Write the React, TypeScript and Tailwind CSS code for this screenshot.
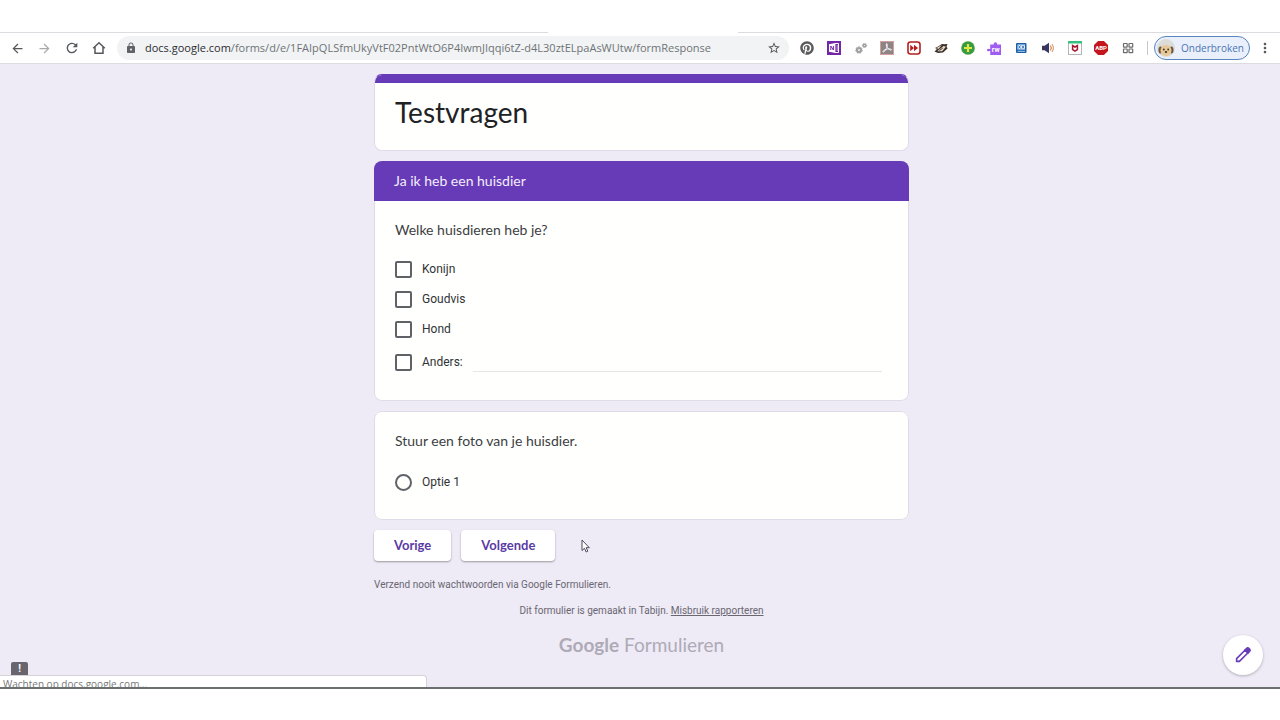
import React from "react"
import {
  MdArrowBack,
  MdArrowForward,
  MdRefresh,
  MdLock,
  MdStarBorder,
  MdMoreVert,
} from "react-icons/md"
import { FaPinterest } from "react-icons/fa"

const pets = ["Konijn", "Goudvis", "Hond"]

const navButton = "flex h-7 w-[27px] items-center justify-center text-[#55585c]"
const checkbox = "h-[17px] w-[17px] shrink-0 appearance-none rounded-xs border-2 border-[#5f6368] bg-white"
const formButton =
  "h-[31px] rounded-sm bg-white px-5 font-['Lato',sans-serif] text-[13px] font-bold text-[#5b3aa5] shadow-[0_1px_2px_rgba(0,0,0,0.35)]"
const question = "float-left w-full font-['Lato',sans-serif] text-[14px] leading-5 text-[#3c4043]"

function HomeIcon() {
  return (
    <svg viewBox="0 0 14 14" className="h-3.5 w-3.5" fill="none" stroke="currentColor" strokeWidth="1.5">
      <path d="M1.2 7.2 7 1.8l5.8 5.4M3 6v6.2h8V6" />
    </svg>
  )
}

function PencilIcon() {
  return (
    <svg viewBox="0 0 20 20" className="h-5 w-5" fill="none" stroke="currentColor" strokeWidth="1.6">
      <path d="M3.600 13.600 12.200 5l2.800 2.800-8.600 8.600H3.600z" strokeLinejoin="round" />
      <path d="m12 5 1.700-1.700a1.500 1.500 0 0 1 2.100 0l.9.9a1.500 1.500 0 0 1 0 2.100L15 8z" fill="currentColor" />
    </svg>
  )
}

function NotebookIcon() {
  return (
    <svg viewBox="0 0 14 14" className="h-3.5 w-3.5">
      <rect width="14" height="14" fill="#7326a8" />
      <path d="M8 2.5h3.5v9H8" fill="none" stroke="#fff" />
      <path d="M11.5 5h-2M11.5 7h-2M11.5 9h-2" stroke="#fff" strokeWidth=".8" />
      <path d="M2 3.2 8.4 2v10L2 10.8z" fill="#fff" />
      <path d="M3.800 9V5l2.600 4V5" fill="none" stroke="#7326a8" />
    </svg>
  )
}

function GearsIcon() {
  return (
    <svg viewBox="0 0 14 14" className="h-3.5 w-3.5" fill="none" stroke="#a0a0a0">
      <circle cx="5" cy="9" r="2" strokeWidth="2.2" />
      <circle cx="5" cy="9" r="3.3" strokeWidth="1" strokeDasharray="1.5 1.4" />
      <circle cx="10.5" cy="4.5" r="1.3" strokeWidth="1.6" />
      <circle cx="10.5" cy="4.5" r="2.2" strokeWidth=".8" strokeDasharray="1.1 .9" />
    </svg>
  )
}

function PdfIcon() {
  return (
    <svg viewBox="0 0 14 14" className="h-3.5 w-3.5">
      <rect x=".5" y=".5" width="13" height="13" fill="#8d8585" stroke="#d3a09b" />
      <path
        d="M6.6 2.6c1.200 0 .5 3.200-.5 5.200S3.700 11.500 3 11c-.8-.8 2-2.500 4.600-2.900s4.200.1 3.900.8c-.5.900-2.900-.5-4.100-2.400S6 2.700 6.600 2.600z"
        fill="none"
        stroke="#fff"
        strokeWidth=".9"
      />
    </svg>
  )
}

function FastForwardIcon() {
  return (
    <svg viewBox="0 0 14 14" className="h-3.5 w-3.5">
      <rect x="1" y="1" width="12" height="12" rx="2.500" fill="#fff" stroke="#b3201f" strokeWidth="1.600" />
      <path d="M3.200 3.800v6.400L7 7zM7 3.800v6.400L11 7z" fill="#b3201f" />
    </svg>
  )
}

function BadgerIcon() {
  return (
    <svg viewBox="0 0 14 14" className="h-3.5 w-3.5">
      <path d="M.5 10.500 3 8l-2-1 3-1.500L8 3l2.500.2L13.500 3l-1 2.500 1 2L9 11.500l-5 .5z" fill="#3a2e28" />
      <path d="M3.200 10.300 9.500 5l2.400.7-3.800 4.600zM2.500 7 7.800 3.900 4.500 8z" fill="#eadfce" />
      <path d="M5.500 9.500 8.800 7" stroke="#3a2e28" />
    </svg>
  )
}

function PlusIcon() {
  return (
    <svg viewBox="0 0 14 14" className="h-3.5 w-3.5">
      <circle cx="7" cy="7" r="6.800" fill="#3c9a3f" />
      <path d="M7 3v8M3 7h8" stroke="#d9e94a" strokeWidth="2.200" />
    </svg>
  )
}

function PuzzleIcon() {
  return (
    <svg viewBox="0 0 14 14" className="h-3.5 w-3.5">
      <path d="M3.200 3.500h3.600a1.700 1.700 0 1 1 3.200 0H14V14H3.200v-4h-1a1.300 1.300 0 1 1 0-2h1z" fill="#a05df0" />
      <text x="8.700" y="11" fontSize="7" fontWeight="700" textAnchor="middle" fill="#fff" fontFamily="Roboto, sans-serif">
        rw
      </text>
    </svg>
  )
}

function ReaderIcon() {
  return (
    <svg viewBox="0 0 14 14" className="h-3.5 w-3.5">
      <rect x="2" y="2" width="10.500" height="10" rx="1" fill="#1d5fa6" />
      <rect x="3.500" y="3.500" width="7.500" height="5" fill="#e1efff" />
      <path d="m4.500 4.500 2 3m0-3-2 3m3.500-3 2 3m0-3-2 3" stroke="#1d5fa6" strokeWidth=".8" />
      <path d="M3.500 10.300H11" stroke="#a9cdf2" />
    </svg>
  )
}

function SpeakerIcon() {
  return (
    <svg viewBox="0 0 14 14" className="h-3.5 w-3.5" fill="none">
      <path d="M1 4.800h2.500L8 1.800v10.400l-4.500-3H1z" fill="#39375f" />
      <path d="M9.500 4.500q1.600 2.500 0 5" stroke="#c9834b" strokeWidth="1.200" />
      <path d="M11 3q2.800 4 0 8" stroke="#d9a37b" strokeWidth="1.200" />
    </svg>
  )
}

function ShieldIcon() {
  return (
    <svg viewBox="0 0 14 14" className="h-3.5 w-3.5">
      <rect x=".5" y=".5" width="13" height="13" fill="#fff" stroke="#b5b5b5" />
      <path d="M0 0h14v2.500H0z" fill="#36c27e" />
      <path d="M4.600 4.500v4L7 10.200l2.400-1.700v-4L7 6z" fill="none" stroke="#a5182d" strokeWidth="1.500" />
    </svg>
  )
}

function AdblockIcon() {
  return (
    <svg viewBox="0 0 14 14" className="h-3.5 w-3.5">
      <path d="M4.100 0h5.800L14 4.100v5.800L9.900 14H4.100L0 9.900V4.100z" fill="#c4161c" />
      <text x="7" y="9.200" fontSize="6" fontWeight="700" textAnchor="middle" fill="#fff" fontFamily="Roboto, sans-serif">
        ABP
      </text>
    </svg>
  )
}

function GridIcon() {
  return (
    <svg viewBox="0 0 14 14" className="h-3.5 w-3.5" fill="none" stroke="#6a6a6a" strokeWidth="1.200">
      <rect x="2.500" y="2.500" width="3.700" height="3.700" rx=".5" />
      <rect x="8" y="2.500" width="3.700" height="3.700" rx=".5" />
      <rect x="2.500" y="8" width="3.700" height="3.700" rx=".5" />
      <rect x="8" y="8" width="3.700" height="3.700" rx=".5" />
    </svg>
  )
}

function DogAvatar() {
  return (
    <svg viewBox="0 0 18 18" className="h-[18px] w-[18px] shrink-0">
      <circle cx="9" cy="9" r="9" fill="#dcdcd8" />
      <ellipse cx="3.500" cy="11" rx="2" ry="3.500" fill="#6b5642" />
      <ellipse cx="14.500" cy="11" rx="2" ry="3.500" fill="#6b5642" />
      <ellipse cx="9" cy="11.500" rx="5.500" ry="5.500" fill="#e7c898" />
      <circle cx="6.800" cy="10.500" r=".9" fill="#40301f" />
      <circle cx="11.200" cy="10.500" r=".9" fill="#40301f" />
      <ellipse cx="9" cy="13" rx="1.200" ry=".9" fill="#40301f" />
    </svg>
  )
}

const extensions = [
  { name: "Pinterest", icon: <FaPinterest className="h-3.5 w-3.5 text-[#5b5b5b]" /> },
  { name: "Notebook", icon: <NotebookIcon /> },
  { name: "Gears", icon: <GearsIcon /> },
  { name: "PDF", icon: <PdfIcon /> },
  { name: "Fast forward", icon: <FastForwardIcon /> },
  { name: "Badger", icon: <BadgerIcon /> },
  { name: "Add", icon: <PlusIcon /> },
  { name: "Read and write", icon: <PuzzleIcon /> },
  { name: "Reader", icon: <ReaderIcon /> },
  { name: "Volume", icon: <SpeakerIcon /> },
  { name: "Shield", icon: <ShieldIcon /> },
  { name: "Adblock", icon: <AdblockIcon /> },
  { name: "Apps", icon: <GridIcon /> },
]

function Toolbar() {
  return (
    <header className="border-b border-[#dcdce0] bg-white">
      {/* Bottom edge of the tab strip, open under the active tab */}
      <div className="flex h-[33px]">
        <div className="w-[548px] border-b border-[#dcdce0]" />
        <div className="w-[190px]" />
        <div className="flex-1 border-b border-[#dcdce0]" />
      </div>
      <div className="flex h-[30px] items-center pl-1">
        <button aria-label="Vorige pagina" className={navButton}><MdArrowBack className="h-[15px] w-[15px]" /></button>
        <button aria-label="Volgende pagina" className={`${navButton} opacity-50`}><MdArrowForward className="h-[15px] w-[15px]" /></button>
        <button aria-label="Vernieuwen" className={navButton}><MdRefresh className="h-4 w-4" /></button>
        <button aria-label="Startpagina" className={navButton}><HomeIcon /></button>
        <div className="ml-[5px] flex h-6 min-w-0 flex-1 items-center rounded-full bg-[#f1f3f4] pr-2 pl-2">
          <MdLock className="h-3 w-3 shrink-0 text-[#5f6368]" />
          <a
            href="#"
            className="ml-2 flex-1 truncate font-['Open_Sans','Noto_Sans',sans-serif] text-[11px] text-[#6f7377]"
          >
            <span className="text-[#2c2e31]">docs.google.com</span>
            /forms/d/e/1FAIpQLSfmUkyVtF02PntWtO6P4IwmJIqqi6tZ-d4L30ztELpaAsWUtw/formResponse
          </a>
          <button aria-label="Bladwijzer"><MdStarBorder className="h-3.5 w-3.5 text-[#55585c]" /></button>
        </div>
        <div className="ml-[11px] flex w-[335px] items-center justify-between">
          {extensions.map((ext) => (
            <button key={ext.name} aria-label={ext.name}>{ext.icon}</button>
          ))}
        </div>
        <div className="ml-3 h-3.5 w-px bg-[#c9c9cd]" />
        <button className="ml-1.5 flex h-6 w-24 items-center gap-1.5 rounded-full border border-[#5a84bf] bg-[#e9f0fb] pl-[2px] font-['Open_Sans','Noto_Sans',sans-serif] text-[10px] text-[#4d73b5]">
          <DogAvatar />
          Onderbroken
        </button>
        <button aria-label="Menu" className="flex w-[30px] justify-center"><MdMoreVert className="h-4 w-4 text-[#55585c]" /></button>
      </div>
    </header>
  )
}

export default function App() {
  return (
    <div className="flex min-h-screen flex-col bg-white pb-[31px] font-['Roboto',sans-serif]">
      <Toolbar />
      <main className="relative flex-1 border-b-2 border-[#6b706e] bg-[#eeeaf6] pt-2.5 pb-6 pl-[3px]">
        <form className="mx-auto max-w-[535px]" onSubmit={(e) => e.preventDefault()}>
          <div className="overflow-hidden rounded-lg border border-[#dfdbe8] border-t-[#673ab7] bg-[#fffffd]">
            <div className="h-2 bg-[#673ab7]" />
            <h1 className="px-5 pt-[11px] pb-5 font-['Lato',sans-serif] text-[28px] leading-9 text-[#202124]">
              Testvragen
            </h1>
          </div>

          <h2 className="mt-2.5 rounded-t-lg bg-[#673ab7] px-5 font-['Lato',sans-serif] text-[14px] leading-10 text-[#f3eefb]">
            Ja ik heb een huisdier
          </h2>
          <fieldset className="rounded-b-lg border border-t-0 border-[#dfdbe8] bg-[#fffffd] px-5 pt-[19px] pb-5">
            <legend className={question}>Welke huisdieren heb je?</legend>
            <div className="clear-both pt-3.5">
              {pets.map((pet) => (
                <label key={pet} className="flex h-[30px] items-center gap-2.5 text-[12px] text-[#303336]">
                  <input type="checkbox" className={checkbox} />
                  {pet}
                </label>
              ))}
              <div className="flex h-9 items-center text-[12px] text-[#303336]">
                <label className="flex items-center gap-2.5">
                  <input type="checkbox" className={checkbox} />
                  Anders:
                </label>
                <input
                  type="text"
                  aria-label="Ander antwoord"
                  className="mr-1.5 ml-2.5 h-[19px] min-w-0 flex-1 border-b border-[#e6e6e6] outline-none"
                />
              </div>
            </div>
          </fieldset>

          <fieldset className="mt-2.5 rounded-lg border border-[#dfdbe8] bg-[#fffffd] px-5 pt-[19px] pb-[22px]">
            <legend className={question}>Stuur een foto van je huisdier.</legend>
            <div className="clear-both pt-4">
              <label className="flex h-[30px] items-center gap-2.5 text-[12px] text-[#303336]">
                <input
                  type="radio"
                  name="foto"
                  className="h-[17px] w-[17px] appearance-none rounded-full border-2 border-[#5f6368]"
                />
                Optie 1
              </label>
            </div>
          </fieldset>

          <div className="mt-2.5 flex items-center gap-2.5">
            <button type="button" className={formButton}>Vorige</button>
            <button type="submit" className={formButton}>Volgende</button>
            {/* Mouse pointer */}
            <svg viewBox="0 0 9 14" className="ml-4 h-3.5 w-[9px]" fill="#fff" stroke="#4a4a55">
              <path d="M1 1v10.500l2.500-2.200 1.700 3.700 1.600-.8L5.200 8.700h3.100z" />
            </svg>
          </div>

          <p className="mt-4 text-[10px] leading-4 text-[#6a6771]">
            Verzend nooit wachtwoorden via Google Formulieren.
          </p>
          <p className="mt-2.5 text-center text-[10px] leading-4 text-[#6a6771]">
            Dit formulier is gemaakt in Tabijn.{" "}
            <a href="#" className="underline">Misbruik rapporteren</a>
          </p>
          <p className="mt-3 text-center font-['Lato',sans-serif] text-[19px] leading-7 text-[#aeaab6]">
            <span className="font-bold">Google</span> Formulieren
          </p>
        </form>

        <button
          aria-label="Bewerken"
          className="absolute right-[17px] bottom-3 flex h-10 w-10 items-center justify-center rounded-full bg-white text-[#673ab7] shadow-[0_1px_3px_rgba(0,0,0,0.25)]"
        >
          <PencilIcon />
        </button>

        <div className="absolute bottom-0 left-0 flex w-[427px] flex-col">
          <button
            aria-label="Probleem melden"
            className="ml-[11px] flex h-[13px] w-[17px] items-center justify-center rounded-t-xs bg-[#69656f] text-[10px] font-bold text-white"
          >
            !
          </button>
          <div className="h-3 overflow-hidden rounded-tr-sm border-t border-r border-[#d5d2da] bg-white pl-[3px] font-['Open_Sans','Noto_Sans',sans-serif] text-[10px] leading-4 text-[#777b7a]">
            Wachten op docs.google.com...
          </div>
        </div>
      </main>
    </div>
  )
}
